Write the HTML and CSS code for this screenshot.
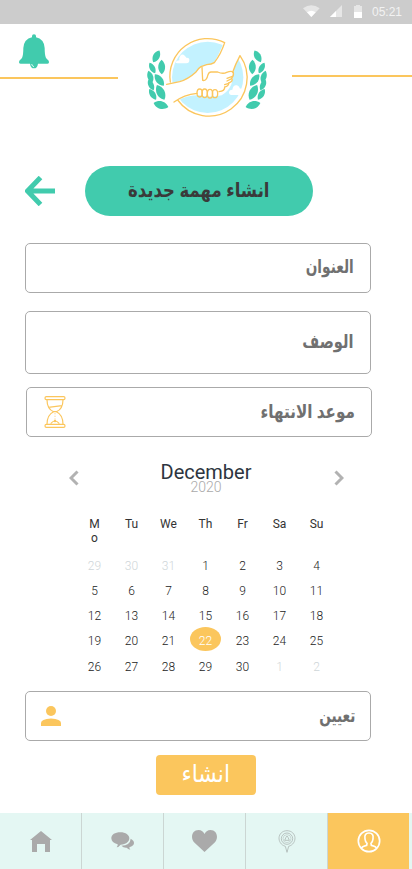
FILE: index.html
```html
<!DOCTYPE html>
<html lang="ar">
<head>
<meta charset="utf-8">
<title>انشاء مهمة جديدة</title>
<link rel="stylesheet" href="styles.css">
</head>
<body>
<div class="status">
  <svg width="17" height="12" viewBox="0 0 51 36"><path d="M0 10Q25-8 50 10L25 36Z" fill="#e6e6e6"/><path d="M12 22Q25 12 38 22L25 36Z" fill="#fff"/></svg>
  <svg class="signal" width="12" height="12" viewBox="0 0 12 12"><path d="M12 0v12H0z" fill="#e6e6e6"/><path d="M6 6v6H0z" fill="#fff"/></svg>
  <svg class="battery" width="8" height="13" viewBox="0 0 8 13"><path d="M2 0h4v1h2v6H0V1h2z" fill="#e6e6e6"/><path d="M0 7h8v6H0z" fill="#fff"/></svg>
  <span class="time">05:21</span>
</div>
<header class="header">
  <div class="side left">
    <svg class="bell" width="32" height="36" viewBox="0 0 96 108"><path fill="#41cbad" d="M42 10V6q0-5 6-5t6 5v4Q78 15 80 42q0 22 4 30l8 8q3 9-4 9H60q-2 14-12 14T36 89H8q-7 0-4-9l8-8q4-8 4-30 2-27 26-32z"/><path fill="none" stroke="#fff" stroke-width="2.5" d="M41 90q1 7 7 8"/></svg>
    <i class="rule"></i>
  </div>
  <svg class="logo" width="135" height="95" viewBox="0 0 405 285">
    <defs><path id="leaf" d="M0-20C12-9 12 9 0 20-12 9-12-9 0-20z"/></defs>
    <circle cx="203" cy="142" r="107" fill="#c3f2ff"/>
    <path d="M107 98q1-6 11-7-2-7 3-14 6-7 14 1 5 7 4 5 10-1 9 8 0 9-9 9h-27zM267 188q0-9 10-9 3-16 14-13 7 2 9 10 6-1 9 4l-5 15h-31q-6-2-6-7z" fill="#fff"/>
    <path d="M78 163l42-9q34-10 61-43l9-5 31-7q11-15 31-63l40-10 8 51q-16 29-22 54 3 43-33 65-35 7-66 0-40 0-66 16l-30 12z" fill="#fff"/>
    <g fill="none" stroke="#fbc65d" stroke-width="4" stroke-linecap="round" stroke-linejoin="round">
      <path d="M91 156A113 113 0 0 1 254 38q-11 34-31 60-8 5-23 6l-17 6q-10 6-15 16-24 22-49 29l-39 8"/>
      <path d="M102 216q30-22 69-26M113 210A113 113 0 0 0 300 77q-14 26-22 50"/>
      <path d="M186 112l2 39q12 3 16-17 3-8 9-8h20q16 7 27 1 15-6 20 0 2 11-5 17 6 10-9 15 0 10-12 12 1 12-17 14"/>
      <path d="M277 139l-16 6m14 1l-14 7m5 7l-12 4"/>
      <ellipse cx="179" cy="189" rx="8" ry="12"/><ellipse cx="194" cy="190" rx="8" ry="13"/><ellipse cx="210" cy="191" rx="8" ry="13"/><ellipse cx="225" cy="191" rx="8" ry="12"/>
    </g>
    <g id="leaves" fill="#41cbad">
      <use href="#leaf" transform="translate(49 79) rotate(28) scale(1.1 1)"/>
      <use href="#leaf" transform="translate(65 111) rotate(-1) scale(1.15 1.1)"/>
      <use href="#leaf" transform="translate(37 114) rotate(-28) scale(.9)"/>
      <use href="#leaf" transform="translate(31 140) rotate(-18) scale(.95)"/>
      <use href="#leaf" transform="translate(58 150) rotate(-38) scale(1.15 1.1)"/>
      <use href="#leaf" transform="translate(33 165) rotate(-26) scale(.9)"/>
      <use href="#leaf" transform="translate(62 187) rotate(-27) scale(1.35 1.25)"/>
      <use href="#leaf" transform="translate(38 193) rotate(-32) scale(.95)"/>
      <use href="#leaf" transform="translate(63 225) rotate(-74) scale(1.3 1.15)"/>
    </g>
    <use href="#leaves" transform="translate(402 0) scale(-1 1)"/>
  </svg>
  <div class="side right"><i class="rule"></i></div>
</header>
<main>
  <div class="titlebar">
    <svg width="30" height="30" viewBox="0 0 30 30"><path d="M15.500 1.500L2.500 15l13 13.500M3 15h27" fill="none" stroke="#41cbad" stroke-width="5"/></svg>
    <h1 class="title" dir="rtl"><span>انشاء مهمة جديدة</span></h1>
  </div>
  <div class="field name" dir="rtl"><span>العنوان</span></div>
  <div class="field desc" dir="rtl"><span>الوصف</span></div>
  <div class="field due" dir="rtl"><span>موعد الانتهاء</span>
    <svg width="22" height="32" viewBox="0 0 66 96" fill="none" stroke="#fbc65d" stroke-width="3.500"><rect x="3" y="2" width="60" height="9" rx="4"/><rect x="3" y="85" width="60" height="9" rx="4"/><path d="M9 11q0 28 20 36h8q20-8 20-36M29 47Q9 56 9 85M37 47q20 9 20 38M13 34l41-5"/><path d="M33 51v20" stroke-dasharray="4 4" stroke-width="2"/><path d="M20 83q13-16 26 0"/><circle cx="33" cy="75" r="2"/></svg>
  </div>
  <section class="calendar">
    <div class="month">
      <svg width="10" height="16" viewBox="0 0 10 16"><path d="M8.500 1.500L2 8l6.500 6.500" fill="none" stroke="#b2b2b2" stroke-width="3"/></svg>
      <div class="label"><b>December</b><small>2020</small></div>
      <svg width="10" height="16" viewBox="0 0 10 16"><path d="M1.500 1.500L8 8l-6.500 6.500" fill="none" stroke="#b2b2b2" stroke-width="3"/></svg>
    </div>
    <div class="days week"><span>M<br>o</span><span>Tu</span><span>We</span><span>Th</span><span>Fr</span><span>Sa</span><span>Su</span></div>
    <div class="days dates">
      <span class="off">29</span><span class="off">30</span><span class="off">31</span><span>1</span><span>2</span><span>3</span><span>4</span>
      <span>5</span><span>6</span><span>7</span><span>8</span><span>9</span><span>10</span><span>11</span>
      <span>12</span><span>13</span><span>14</span><span>15</span><span>16</span><span>17</span><span>18</span>
      <span>19</span><span>20</span><span>21</span><span class="picked">22</span><span>23</span><span>24</span><span>25</span>
      <span>26</span><span>27</span><span>28</span><span>29</span><span>30</span><span class="off">1</span><span class="off">2</span>
    </div>
  </section>
  <div class="field assign" dir="rtl"><span>تعيين</span>
    <svg width="20" height="20" viewBox="0 0 20 20" fill="#fbc65d"><circle cx="10" cy="5" r="5"/><path d="M0 20v-3q0-4 10-4.500Q20 13 20 17v3z"/></svg>
  </div>
  <button class="submit" dir="rtl"><span>انشاء</span></button>
</main>
<nav class="nav">
  <a><svg width="22" height="21" viewBox="0 0 22 21"><path d="M11 0l11 9h-2v12h-5v-8H7v8H2V9H0z" fill="#aaa"/></svg></a>
  <a><svg width="23" height="18" viewBox="0 0 69 54" fill="#aaa"><path d="M28 1c16 0 27 8 27 18S44 38 29 38q-7 8-12 8 4-5 3-9C8 34 1 28 1 19 1 8 12 1 28 1z"/><path d="M59 20q10 5 10 13 0 8-12 12l-2 1q0 4 3 7-7-1-11-6-9 1-16-6 27-1 28-21z"/></svg></a>
  <a><svg width="25" height="22" viewBox="0 0 25 22"><path d="M12.500 22L2.300 12.500C-2 8 0 0 6.500 0c3 0 5 2 6 4 1-2 3-4 6-4C25 0 27 8 22.700 12.500z" fill="#aaa"/></svg></a>
  <a><svg width="18" height="23" viewBox="0 0 54 69" fill="none" stroke="#afb8b6" stroke-width="2.500"><path d="M22 49C-5 41-3 3 27 2c30 1 32 39 5 47l-5 18z"/><circle cx="27" cy="26" r="17"/><circle cx="27" cy="26" r="12" stroke-width="1.500"/><path d="M20 31h14l-4-9q-3-8-6 0z"/></svg></a>
  <a class="active"><svg width="24" height="24" viewBox="0 0 72 72" fill="none" stroke="#fff" stroke-width="5"><circle cx="36" cy="36" r="32"/><path d="M13 58q2-6 16-9l1-6q-5-4-6-13-3-18 12-18t12 18q-1 9-6 13l1 6q14 3 16 9"/></svg></a>
</nav>
</body>
</html>
```
FILE: styles.css
```css
* { box-sizing: border-box; }
body { margin: 0; width: 412px; height: 869px; overflow: hidden; background: #fff; font-family: Roboto, "DejaVu Sans", sans-serif; display: flex; flex-direction: column; }
svg { display: block; flex: none; }
.status { height: 24px; background: #ccc; display: flex; align-items: center; justify-content: flex-end; padding-right: 10px; padding-bottom: 2px; flex: none; }
.signal { margin-left: 10px; }
.battery { margin-left: 12px; }
.time { margin-left: 10px; font: 12px/14px "Liberation Sans", sans-serif; color: #f2f2f2; padding-top: 2px; width: 30px; white-space: nowrap; }
.header { height: 142px; display: grid; grid-template-columns: 118px 174px 120px; flex: none; }
.rule { display: block; height: 2px; background: #fbc65d; }
.bell { margin: 10px 0 7px 18px; }
.right { padding-top: 51px; }
.logo { margin: 6px 0 0 22px; }
main { flex: 1; }
.titlebar { display: flex; align-items: center; height: 50px; padding-left: 25px; gap: 30px; }
.title { margin: 0; width: 228px; height: 50px; border-radius: 25px; background: #41cbad; color: #3a3a3a; font: bold 20px/49px "Liberation Sans", "DejaVu Sans", sans-serif; text-align: center; }
.title span { display: inline-block; transform: scaleX(.825); }
.field { width: 346px; height: 50px; margin-left: 25px; border: 1px solid #aaa; border-radius: 5px; display: flex; align-items: center; justify-content: space-between; padding: 0 16px 3px 15px; color: #707070; font: bold 19px/30px "Liberation Sans", "DejaVu Sans", sans-serif; }
.field span { transform-origin: right center; }
.name { margin-top: 27px; }
.name span { transform: scaleX(.72); }
.desc { margin-top: 18px; height: 63px; padding-bottom: 1px; }
.desc span { transform: scaleX(.77); }
.due { margin: 13px 0 0 26px; padding-left: 17px; padding-bottom: 0; }
.due span { transform: scaleX(.8); }
.assign { margin-top: 12px; padding-bottom: 0; padding-right: 15px; }
.assign span { transform: scaleX(.72); }
.calendar { height: 242px; padding-top: 24px; }
.month { display: flex; justify-content: space-between; align-items: center; width: 275px; margin-left: 68.500px; height: 33px; }
.label { text-align: center; display: flex; flex-direction: column; }
.label b { font: 400 20px/22px Roboto; color: #2d3540; }
.label small { font: 300 14px/14px Roboto; color: #aaa; margin-top: -3px; }
.days { display: grid; grid-template-columns: repeat(7, 37px); margin-left: 76px; text-align: center; }
.week { font-size: 12px; line-height: 14px; color: #333; margin-top: 23px; height: 37px; }
.dates { font-size: 12px; font-weight: 300; grid-template-rows: 25px 25px 25px 26px 25px; line-height: 25px; color: #222; }
.off { color: #cfd6d9; }
.picked { width: 31px; height: 24px; margin: -2px auto 0; border-radius: 50%; background: #fbc65d; color: #fff; line-height: 29px; }
.submit { display: block; margin: 14px 0 0 156px; width: 100px; height: 40px; border: 0; border-radius: 4px; background: #fbc65d; color: #fff; padding: 0 0 3px; font: 24px/36px "Liberation Sans", "DejaVu Sans", sans-serif; }
.submit span { display: inline-block; transform: scaleX(.91); }
.nav { height: 56px; background: #e4f7f3; display: grid; grid-template-columns: repeat(5, 82px); flex: none; }
.nav a { display: flex; align-items: center; justify-content: center; border-right: 1px solid #cbd6d3; }
.nav .active { background: #fbc65d; border: 0; width: 81px; }
```
